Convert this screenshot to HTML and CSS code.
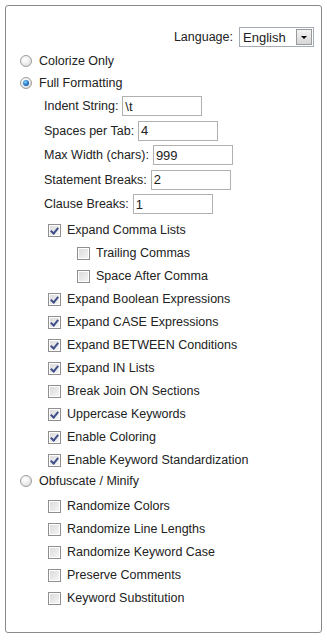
FILE: index.html
```html
<!DOCTYPE html>
<html lang="en">
<head>
    <meta charset="UTF-8">
    <meta name="viewport" content="width=device-width, initial-scale=1.0">
    <title>Formatting Options</title>
    <link rel="stylesheet" href="styles.css">
</head>
<body>
    <div class="panel">
        <div class="lang_row">
            <label for="lang">Language:</label>
            <span class="select_wrap">
                <select id="lang">
                    <option>English</option>
                </select>
                <span class="select_btn"><i></i></span>
            </span>
        </div>

        <label class="radio_row"><input type="radio" name="mode"> Colorize Only</label>
        <label class="radio_row"><input type="radio" name="mode" checked> Full Formatting</label>

        <div class="field_row"><label>Indent String:</label><input type="text" value="\t" class="w80"></div>
        <div class="field_row"><label>Spaces per Tab:</label><input type="text" value="4" class="w80"></div>
        <div class="field_row"><label>Max Width (chars):</label><input type="text" value="999" class="w80"></div>
        <div class="field_row"><label>Statement Breaks:</label><input type="text" value="2" class="w80"></div>
        <div class="field_row"><label>Clause Breaks:</label><input type="text" value="1" class="w80"></div>

        <div class="checks">
            <label class="check_row"><input type="checkbox" checked> Expand Comma Lists</label>
            <label class="check_row sub"><input type="checkbox"> Trailing Commas</label>
            <label class="check_row sub"><input type="checkbox"> Space After Comma</label>
            <label class="check_row"><input type="checkbox" checked> Expand Boolean Expressions</label>
            <label class="check_row"><input type="checkbox" checked> Expand CASE Expressions</label>
            <label class="check_row"><input type="checkbox" checked> Expand BETWEEN Conditions</label>
            <label class="check_row"><input type="checkbox" checked> Expand IN Lists</label>
            <label class="check_row"><input type="checkbox"> Break Join ON Sections</label>
            <label class="check_row"><input type="checkbox" checked> Uppercase Keywords</label>
            <label class="check_row"><input type="checkbox" checked> Enable Coloring</label>
            <label class="check_row"><input type="checkbox" checked> Enable Keyword Standardization</label>
        </div>

        <label class="radio_row obf"><input type="radio" name="mode"> Obfuscate / Minify</label>

        <div class="checks">
            <label class="check_row"><input type="checkbox"> Randomize Colors</label>
            <label class="check_row"><input type="checkbox"> Randomize Line Lengths</label>
            <label class="check_row"><input type="checkbox"> Randomize Keyword Case</label>
            <label class="check_row"><input type="checkbox"> Preserve Comments</label>
            <label class="check_row"><input type="checkbox"> Keyword Substitution</label>
        </div>
    </div>
</body>
</html>
```

FILE: styles.css
```css
* {
    margin: 0;
    padding: 0;
    box-sizing: border-box;
}

body {
    background: #fff;
    font-family: "Liberation Sans", Arial, sans-serif;
    font-size: 12.5px;
    color: #222;
}

.panel {
    margin: 5px 0 0 5px;
    width: 317px;
    height: 628px;
    border: 1px solid #8a8a8a;
    border-radius: 3px;
    padding-top: 20px;
}

/* language select */
.lang_row {
    display: flex;
    justify-content: flex-end;
    align-items: center;
    gap: 6px;
    height: 22px;
    margin-bottom: 2px;
    padding-right: 7px;
}

.select_wrap {
    position: relative;
    display: inline-block;
    width: 75px;
    height: 20px;
}

.select_wrap select {
    -webkit-appearance: none;
    appearance: none;
    width: 100%;
    height: 100%;
    border: 1px solid #a5acb5;
    background: #fff;
    font-family: inherit;
    font-size: 13px;
    color: #222;
    padding-left: 3px;
    outline: none;
}

.select_btn {
    position: absolute;
    top: 2px;
    right: 2px;
    width: 16px;
    height: 16px;
    border: 1px solid #9a9a9a;
    background: linear-gradient(#f4f4f4, #d6d6d6);
    display: flex;
    align-items: center;
    justify-content: center;
}

.select_btn i {
    width: 0;
    height: 0;
    border-left: 3px solid transparent;
    border-right: 3px solid transparent;
    border-top: 3px solid #000;
    margin-top: 1px;
}

/* radios */
.radio_row {
    display: flex;
    align-items: center;
    height: 22px;
    padding-left: 14px;
}

.radio_row.obf {
    height: 23px;
}

input[type=radio] {
    -webkit-appearance: none;
    appearance: none;
    width: 12px;
    height: 12px;
    border-radius: 50%;
    border: 1px solid #9c9c9c;
    background: radial-gradient(circle at 40% 35%, #fff 0%, #f2f2f2 40%, #d0d0d0 100%);
    margin-right: 7px;
    position: relative;
}

input[type=radio]:checked::after {
    content: "";
    position: absolute;
    top: 2px;
    left: 2px;
    width: 6px;
    height: 6px;
    border-radius: 50%;
    background: radial-gradient(circle at 40% 35%, #8fd1ff 0%, #2a82cf 45%, #0b3f7a 100%);
}

/* text fields */
.field_row {
    display: flex;
    align-items: center;
    height: 24.5px;
    padding-left: 38px;
}

.field_row:first-of-type {
    margin-top: 1px;
}

.field_row label {
    margin-right: 4px;
}

.w80 {
    width: 80px;
    height: 20px;
    border: 1px solid #b0b0b0;
    font-family: inherit;
    font-size: 13px;
    color: #222;
    padding: 0 2px;
    outline: none;
}

/* checkboxes */
.checks {
    padding-top: 2px;
}

.checks + .radio_row {
    margin-top: -2px;
}

.check_row {
    display: flex;
    align-items: center;
    height: 23px;
    padding-left: 42px;
}

.check_row.sub {
    padding-left: 71px;
}

input[type=checkbox] {
    -webkit-appearance: none;
    appearance: none;
    width: 13px;
    height: 13px;
    border: 1px solid #8f8f8f;
    background: linear-gradient(135deg, #d9d9d9, #f7f7f7);
    box-shadow: inset 0 0 0 1px #fff;
    margin-right: 6px;
    position: relative;
}

input[type=checkbox]:checked::after {
    content: "";
    position: absolute;
    left: 3px;
    top: 1px;
    width: 3px;
    height: 6px;
    border-right: 2px solid #3f4f8a;
    border-bottom: 2px solid #3f4f8a;
    transform: rotate(40deg);
}
```
